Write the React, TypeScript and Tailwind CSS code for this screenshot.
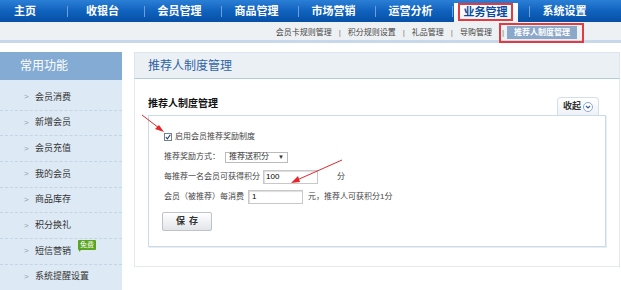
import React from "react";

const navItems = ["收银台", "会员管理", "商品管理", "市场营销", "运营分析", "业务管理", "系统设置"];
const subItems = ["会员卡规则管理", "积分规则设置", "礼品管理", "导购管理"];
const sideItems = ["会员消费", "新增会员", "会员充值", "我的会员", "商品库存", "积分换礼", "短信营销", "系统提醒设置"];

const font = { fontFamily: '"Liberation Sans", "Noto Sans CJK SC", sans-serif' };

const Sep = () => <span className="ml-[3px] w-px h-[11px] bg-[#6f9fd8] shrink-0" />;

const TopNav: React.FC = () => (
  <div className="flex h-[22px] bg-gradient-to-b from-[#2b7fd6] via-[#0f62bd] to-[#0750a6] text-white text-[11px] font-bold">
    <div className="w-[64px] pr-[14px] flex items-center justify-center">主页</div>
    {navItems.map((label) =>
      label === "业务管理" ? (
        <div key={label} className="flex items-center w-[77px]">
          <Sep />
          <div className="self-end ml-[1px] h-[19px] w-[64px] bg-gradient-to-b from-white to-[#eef2f6] flex items-start pl-[4px]">
            <span className="h-[18px] w-[55px] border-2 border-[#e23a3f] flex items-center justify-center text-[#0a4a9e]">
              {label}
            </span>
          </div>
        </div>
      ) : (
        <div key={label} className="flex items-center w-[77px]">
          <Sep />
          <span className="flex-1 text-center pr-[4px]">{label}</span>
        </div>
      )
    )}
  </div>
);

const SubNav: React.FC = () => (
  <div className="flex h-[21px] items-center justify-end pr-[37px] bg-[#eef1f4] shadow-[inset_0_-3px_0_#c6d8ea] text-[8px] text-[#444]">
    {subItems.map((label) => (
      <React.Fragment key={label}>
        <span>{label}</span>
        <span className="mx-[7px] text-[#777]">|</span>
      </React.Fragment>
    ))}
    <div className="-ml-[9px] h-[20px] w-[85px] border-2 border-[#e23a3f] flex items-center pl-[1px]">
      <span className="text-[#777]">|</span>
      <span className="ml-[3px] h-[13px] w-[70px] bg-[#8ba7c9] text-white font-bold flex items-center justify-center">
        推荐人制度管理
      </span>
    </div>
  </div>
);

const Sidebar: React.FC = () => (
  <div className="w-[122px] shrink-0">
    <div className="h-[28px] bg-[#84abd3] text-white text-[12px] flex items-center pl-[20px]">常用功能</div>
    <div className="bg-[#dde9f4] pt-[5px]">
      {sideItems.map((label) => (
        <div
          key={label}
          className="h-[25.7px] flex items-center border-b border-dashed border-[#c4d4e4] text-[9px] text-[#333]"
        >
          <span className="w-[35px] pl-[24px] text-[#999] text-[8px]">&gt;</span>
          <span className="relative">
            {label}
            {label === "短信营销" && (
              <span className="absolute left-[43px] -top-[5px] h-[10px] px-[2px] bg-[#5ba41f] text-white text-[7px] leading-[10px] rounded-[1px] whitespace-nowrap">
                免费
                <span className="absolute left-[1px] top-[9px] w-0 h-0 border-t-[3px] border-t-[#5ba41f] border-r-[3px] border-r-transparent" />
              </span>
            )}
          </span>
        </div>
      ))}
    </div>
  </div>
);

const Row: React.FC<{ children: React.ReactNode }> = ({ children }) => (
  <div className="h-[20px] flex items-center text-[8px] text-[#444]">{children}</div>
);

const Panel: React.FC = () => (
  <div className="flex-1 mr-[1px]">
    <div className="h-[27px] bg-[#ebf0f5] border border-[#dde6ef] border-b-[#b5cbe0] flex items-center pl-[13px] text-[12px] text-[#2f63a6]">
      推荐人制度管理
    </div>
    <div className="border border-t-0 border-[#e2e9f1] px-[13px] pb-[19px]">
      <div className="h-[36px] flex items-end justify-between">
        <span className="pb-[4px] text-[10px] font-bold text-[#111]">推荐人制度管理</span>
        <span className="mr-[7px] h-[18px] w-[42px] rounded-t-[4px] border border-b-0 border-[#d5dfe9] bg-gradient-to-b from-white to-[#edf2f7] flex items-center justify-center gap-[2px] text-[9px] font-bold text-[#333]">
          收起
          <span className="w-[10px] h-[10px] rounded-full border border-[#8aa8cc] bg-white flex items-center justify-center">
            <svg width="6" height="4" viewBox="0 0 6 4">
              <path d="M1 1 L3 3 L5 1" stroke="#2f5f9e" strokeWidth="1.2" fill="none" />
            </svg>
          </span>
        </span>
      </div>
      <div className="border border-[#cddbe9] shadow-[1px_1px_0_#e6edf4] pl-[15px] pt-[11px] pb-[15px]">
        <Row>
          <span className="w-[8px] h-[8px] border border-[#6d7f95] bg-white flex items-center justify-center mr-[3px]">
            <svg width="6" height="6" viewBox="0 0 6 6">
              <path d="M0.8 3 L2.4 4.8 L5.3 0.8" stroke="#1f3d6b" strokeWidth="1.1" fill="none" />
            </svg>
          </span>
          启用会员推荐奖励制度
        </Row>
        <Row>
          <span className="w-[61px]">推荐奖励方式：</span>
          <span className="h-[11px] w-[63px] border border-[#bbb] bg-white flex items-center justify-between px-[3px] text-[#333]">
            推荐送积分
            <span className="text-[6px]">▼</span>
          </span>
        </Row>
        <Row>
          <span className="w-[99px]">每推荐一名会员可获得积分</span>
          <span className="h-[14px] w-[55px] border border-[#c8c8c8] shadow-[inset_1px_1px_1px_#ddd] bg-white flex items-center pl-[2px] text-[8px] text-black">
            100
          </span>
          <span className="ml-[19px]">分</span>
        </Row>
        <Row>
          <span className="w-[84px]">会员（被推荐）每消费</span>
          <span className="h-[14px] w-[55px] border border-[#c8c8c8] shadow-[inset_1px_1px_1px_#ddd] bg-white flex items-center pl-[3px] text-[8px] text-black">
            1
          </span>
          <span className="ml-[5px]">元，推荐人可获积分1分</span>
        </Row>
        <button className="mt-[1px] -ml-[2px] h-[19px] w-[50px] border border-[#bcc3cb] rounded-[2px] bg-gradient-to-b from-white to-[#e2e5e9] text-[9px] font-bold text-[#333] tracking-[4px] pl-[4px]">
          保存
        </button>
      </div>
    </div>
    <div className="mt-[26px] h-[10px] border-t border-[#dde6ef]" />
  </div>
);

const App: React.FC = () => (
  <div className="relative w-[621px] h-[290px] overflow-hidden bg-white" style={font}>
    <TopNav />
    <SubNav />
    <div className="flex gap-[12px] pt-[9px]">
      <Sidebar />
      <Panel />
    </div>
    {/* red annotation arrows */}
    <svg className="absolute inset-0 pointer-events-none" width="621" height="290">
      <line x1="142" y1="115" x2="159" y2="128" stroke="#e5262a" strokeWidth="1" />
      <polygon points="164,132 155,129 159,125" fill="#e5262a" />
      <line x1="342" y1="160" x2="297" y2="180" stroke="#e5262a" strokeWidth="1" />
      <polygon points="291,183 298,176 300,182" fill="#e5262a" />
    </svg>
  </div>
);

export default App;
